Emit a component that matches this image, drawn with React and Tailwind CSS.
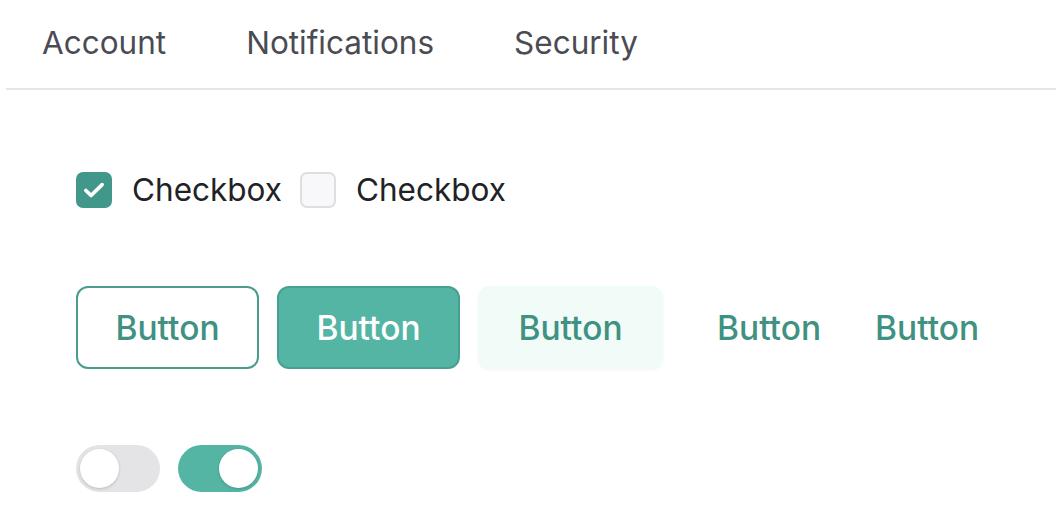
import { useState } from 'react'

const tabs = ['Account', 'Notifications', 'Security']

function Checkbox({ checked, label, onChange }) {
  return (
    <label className="flex items-center gap-[20px] cursor-pointer" onClick={onChange}>
      {checked ? (
        <span className="flex h-[36px] w-[36px] items-center justify-center rounded-[7px] bg-[#40978a]">
          <svg className="h-[26px] w-[26px]" viewBox="0 0 24 24" fill="none">
            <path d="M4.5 12.5l4.8 4.6L19.5 7" stroke="white" strokeWidth="3.4" strokeLinecap="round" strokeLinejoin="round" />
          </svg>
        </span>
      ) : (
        <span className="h-[36px] w-[36px] rounded-[7px] border-2 border-[#dedee3] bg-[#f8f8fa]" />
      )}
      <span className="text-[31.5px] leading-none text-[#222226]">{label}</span>
    </label>
  )
}

function Toggle({ on, onChange }) {
  return (
    <button
      onClick={onChange}
      className={`flex h-[47px] w-[84px] items-center rounded-full px-[4px] ${on ? 'justify-end bg-[#55b5a5]' : 'justify-start bg-[#e4e4e7]'}`}
    >
      <span className="h-[39px] w-[39px] rounded-full bg-white shadow-[0_1px_3px_rgba(0,0,0,0.18)]" />
    </button>
  )
}

export default function App() {
  const [tab, setTab] = useState(0)
  const [boxes, setBoxes] = useState([true, false])
  const [toggles, setToggles] = useState([false, true])

  return (
    <div className="min-h-screen bg-white" style={{ fontFamily: 'Inter, "Noto Sans", sans-serif' }}>
      {/* Tabs */}
      <div className="ml-[6px] flex h-[90px] gap-[80px] border-b-2 border-[#e6e6ea] pl-[36px]">
        {tabs.map((t, i) => (
          <button
            key={t}
            onClick={() => setTab(i)}
            className="flex h-full items-center pb-[2px] text-[31.5px] text-[#4b4b53]"
          >
            {t}
          </button>
        ))}
      </div>

      <div className="flex flex-col pl-[76px]">
        {/* Checkboxes */}
        <div className="mt-[82px] flex items-center gap-[18px]">
          {boxes.map((c, i) => (
            <Checkbox
              key={i}
              checked={c}
              label="Checkbox"
              onChange={() => setBoxes(boxes.map((v, j) => (j === i ? !v : v)))}
            />
          ))}
        </div>

        {/* Buttons */}
        <div className="mt-[78px] flex items-center gap-[18px]">
          <button className="flex h-[83px] w-[183px] items-center justify-center rounded-[12px] border-2 border-[#4a9c8d] bg-white pt-[2px] text-[33.5px] font-medium text-[#3f9182]">
            Button
          </button>
          <button className="flex h-[83px] w-[183px] items-center justify-center rounded-[12px] border-2 border-[#48a091] bg-[#55b5a5] pt-[2px] text-[33.5px] font-medium text-white">
            Button
          </button>
          <button className="flex h-[83px] w-[185px] items-center justify-center rounded-[12px] bg-[#f1fbf8] pt-[2px] text-[33.5px] font-medium text-[#3f9182] shadow-[0_1px_3px_rgba(0,0,0,0.05)]">
            Button
          </button>
          <button className="flex h-[83px] items-center justify-center px-[36px] pt-[2px] text-[33.5px] font-medium text-[#3f9182]">
            Button
          </button>
          <button className="flex h-[83px] items-center justify-center pt-[2px] text-[33.5px] font-medium text-[#3f9182]">
            Button
          </button>
        </div>

        {/* Toggles */}
        <div className="mt-[76px] flex items-center gap-[18px]">
          {toggles.map((on, i) => (
            <Toggle key={i} on={on} onChange={() => setToggles(toggles.map((v, j) => (j === i ? !v : v)))} />
          ))}
        </div>
      </div>
    </div>
  )
}
